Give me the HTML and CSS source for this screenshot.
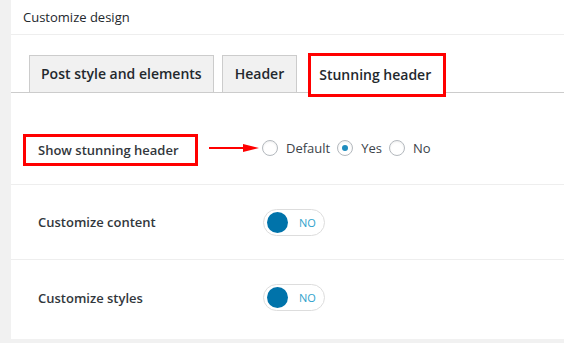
FILE: index.html
```html
<!DOCTYPE html>
<html lang="en">
<head>
    <meta charset="UTF-8" />
    <title>Customize design</title>
    <link rel="stylesheet" href="styles.css">
</head>
<body>
<div class="panel">
  <h2 class="panel-title">Customize design</h2>

  <div class="tabs">
    <div class="tab tab-first">Post style and elements</div>
    <div class="tab">Header</div>
    <div class="tab tab-active">Stunning header</div>
  </div>

  <div class="row row-first">
    <div class="marked-label">Show stunning header</div>
    <!-- стрелка-указатель -->
    <svg class="arrow" width="50" height="10" viewBox="0 0 50 10">
      <line x1="0" y1="5" x2="38" y2="5" stroke="#f00" stroke-width="2" />
      <polygon points="34,1 50,5 34,9" fill="#f00" />
    </svg>
    <div class="radios">
      <label class="radio"><span class="circle"></span>Default</label>
      <label class="radio"><span class="circle checked"></span>Yes</label>
      <label class="radio"><span class="circle"></span>No</label>
    </div>
  </div>

  <div class="row">
    <div class="label">Customize content</div>
    <div class="toggle"><span class="knob"></span><span class="toggle-text">NO</span></div>
  </div>

  <div class="row row-last">
    <div class="label">Customize styles</div>
    <div class="toggle"><span class="knob"></span><span class="toggle-text">NO</span></div>
  </div>
</div>
</body>
</html>
```

FILE: styles.css
```css
body {
    margin: 0;
    background-color: #f1f1f1;
    font-family: "Open Sans", "Noto Sans", sans-serif;
    color: #23282d;
}
.panel {
    margin-left: 11px;
    height: 339px;
    background-color: #fff;
}
.panel-title {
    margin: 0;
    height: 34px;
    line-height: 34px;
    padding-left: 12px;
    font-size: 13px;
    font-weight: normal;
    border-bottom: 1px solid #eee;
}
.tabs {
    display: flex;
    align-items: flex-end;
    gap: 8px;
    padding: 18px 0 0 18px;
    border-bottom: 1px solid #ccc;
}
.tab {
    height: 36px;
    line-height: 36px;
    padding: 0 12px;
    font-size: 14px;
    font-weight: 600;
    background-color: #f1f1f1;
    border: 1px solid #ccc;
    border-bottom: none;
    white-space: nowrap;
}
.tab-first {
    padding: 0 11px;
}
.tab-active {
    height: 38px;
    line-height: 38px;
    margin-left: 3px;
    margin-bottom: -5px;
    padding: 0 12px 0 8px;
    background-color: #fff;
    border: 3px solid #f00;
}
.row {
    display: flex;
    align-items: center;
    height: 74px;
    padding-left: 27px;
    border-bottom: 1px solid #eee;
}
.row-first {
    height: 91px;
    padding: 0 0 0 12px;
    align-items: flex-start;
}
.row-last {
    height: 75px;
    padding-bottom: 4px;
    border-bottom: none;
}
.label {
    width: 225px;
    font-size: 13px;
    font-weight: 600;
    color: #32373c;
}
.marked-label {
    box-sizing: border-box;
    width: 175px;
    height: 32px;
    margin-top: 41px;
    padding-left: 12px;
    line-height: 26px;
    font-size: 13px;
    font-weight: 600;
    color: #32373c;
    border: 3px solid #f00;
}
.arrow {
    margin: 50px 0 0 11px;
}
.radios {
    display: flex;
    gap: 7px;
    margin: 46px 0 0 3px;
}
.radio {
    display: flex;
    align-items: center;
    gap: 8px;
    font-size: 13px;
    color: #3c434a;
}
.circle {
    box-sizing: border-box;
    width: 16px;
    height: 16px;
    border: 1px solid #b4b9be;
    border-radius: 50%;
    background-color: #fff;
    box-shadow: inset 0 1px 2px rgba(0, 0, 0, 0.07);
    display: flex;
    align-items: center;
    justify-content: center;
}
.circle.checked::after {
    content: "";
    width: 6px;
    height: 6px;
    border-radius: 50%;
    background-color: #1e8cbe;
}
.toggle {
    box-sizing: border-box;
    display: flex;
    align-items: center;
    width: 62px;
    height: 27px;
    padding-left: 3px;
    border: 1px solid #ddd;
    border-radius: 14px;
    background-color: #fff;
}
.knob {
    width: 21px;
    height: 21px;
    border-radius: 50%;
    background-color: #0073aa;
}
.toggle-text {
    margin-left: 11px;
    font-size: 11px;
    color: #2ea2cc;
}
```
